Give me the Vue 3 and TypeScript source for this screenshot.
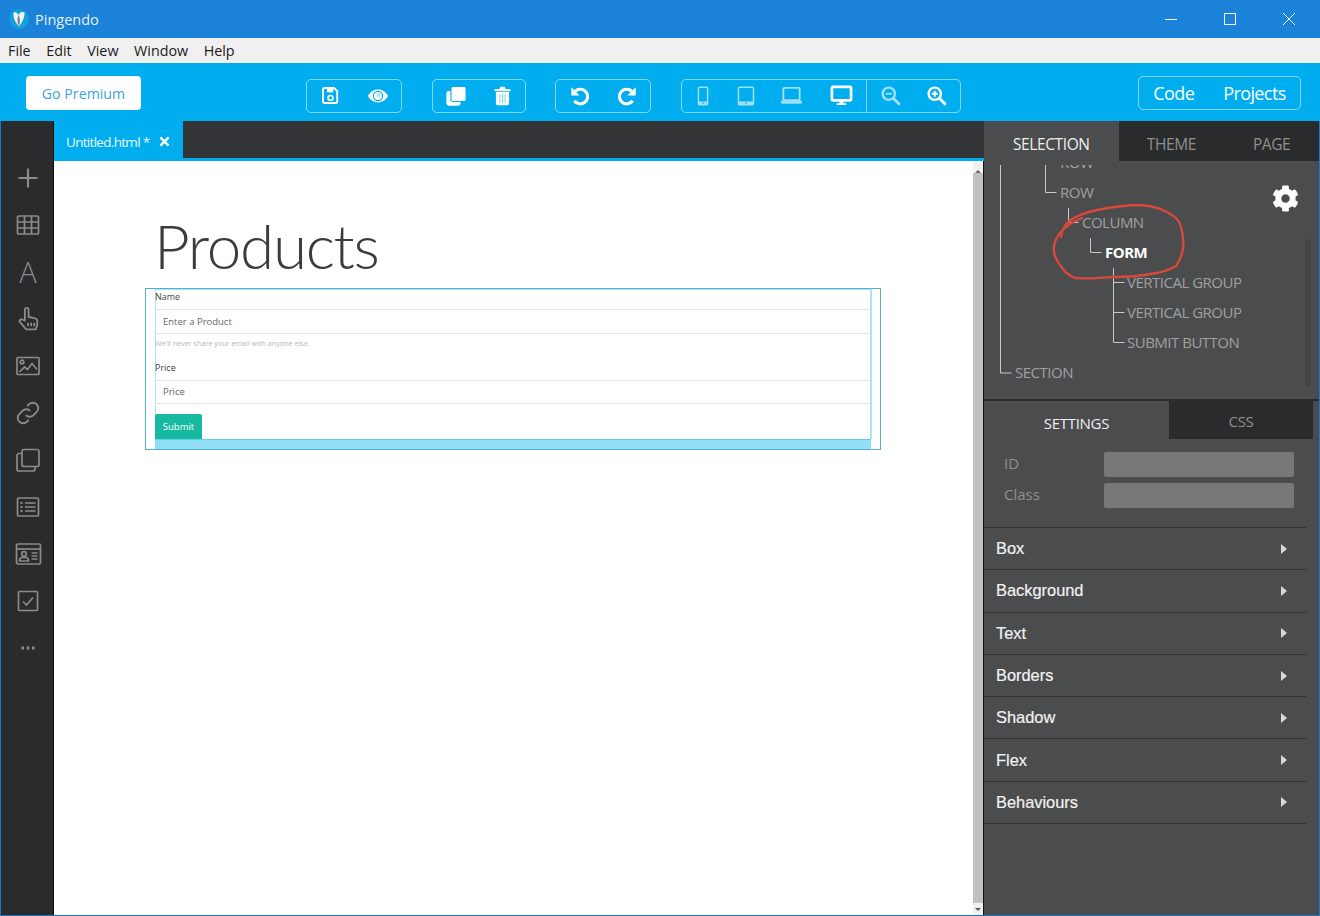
<script setup lang="ts">
const menus = ['File', 'Edit', 'View', 'Window', 'Help']

interface TreeRow {
  label: string
  indent: number
  active?: boolean
}

const treeRows: TreeRow[] = [
  { label: 'ROW', indent: 76 },
  { label: 'ROW', indent: 76 },
  { label: 'COLUMN', indent: 98 },
  { label: 'FORM', indent: 121, active: true },
  { label: 'VERTICAL GROUP', indent: 143 },
  { label: 'VERTICAL GROUP', indent: 143 },
  { label: 'SUBMIT BUTTON', indent: 143 },
  { label: 'SECTION', indent: 31 }
]

const sections = ['Box', 'Background', 'Text', 'Borders', 'Shadow', 'Flex', 'Behaviours']
</script>

<template>
  <div class="window">
    <header class="titlebar">
      <svg class="logo" viewBox="0 0 20 20">
        <circle cx="10" cy="10" r="10" fill="#12a0d8" />
        <path d="M4.500 3.500c2.500-1 4 .5 5 2.500 1-2.500 3.500-3.500 6-2.500 .3 5.500-2.500 10-5.500 14-3.500-3.500-6-8.500-5.500-14z" fill="#eef2f3" />
        <path d="M9.500 6c-1.500 3.500-1.500 8 .5 11.500 1.200-3.500 1.500-8-.5-11.500z" fill="#76858c" />
      </svg>
      <span class="app-name">Pingendo</span>
      <div class="win-controls">
        <svg viewBox="0 0 12 12" class="win-icon"><path d="M0 6.500h12" /></svg>
        <svg viewBox="0 0 12 12" class="win-icon"><rect x=".5" y=".5" width="11" height="11" /></svg>
        <svg viewBox="0 0 12 12" class="win-icon"><path d="M0 0l12 12M12 0L0 12" /></svg>
      </div>
    </header>

    <nav class="menubar">
      <span v-for="m in menus" :key="m">{{ m }}</span>
    </nav>

    <div class="toolbar">
      <button class="premium">Go Premium</button>

      <div class="group g-file">
        <span class="tool w47">
          <svg viewBox="0 0 24 24" width="19" height="19"><path d="M4.500 2.500h12l4 4v13a2 2 0 0 1-2 2h-14a2 2 0 0 1-2-2v-15a2 2 0 0 1 2-2z" fill="none" stroke="#fff" stroke-width="2.400" /><rect x="7.500" y="2" width="8" height="6" fill="#fff" /><circle cx="12" cy="15" r="3" fill="none" stroke="#fff" stroke-width="2.200" /></svg>
        </span>
        <span class="tool w47">
          <svg viewBox="0 0 24 24" width="22" height="22"><path d="M1 12c3-5 7-7 11-7s8 2 11 7c-3 5-7 7-11 7s-8-2-11-7z" fill="#fff" /><circle cx="12" cy="12" r="5" fill="#fff" stroke="#00aeef" stroke-width="1.300" /><circle cx="13" cy="10.800" r="2.800" fill="#bfe9f9" /></svg>
        </span>
      </div>

      <div class="group g-edit">
        <span class="tool w47">
          <svg viewBox="0 0 24 24" width="22" height="22"><rect x="1.500" y="6.500" width="15.500" height="16" rx="2.500" fill="#fff" /><rect x="6.500" y="1.500" width="16.500" height="16.500" rx="2" fill="#fff" stroke="#00aeef" stroke-width="1.200" /></svg>
        </span>
        <span class="tool w47">
          <svg viewBox="0 0 24 24" width="21" height="21"><path d="M3 4.500h5.500l1-2.500h5l1 2.500H21v2.500H3z" fill="#fff" /><path d="M4.500 8h15v13a2 2 0 0 1-2 2h-11a2 2 0 0 1-2-2z" fill="#fff" /><path d="M9 10.500v10M12 10.500v10M15 10.500v10" stroke="#7fd6f7" stroke-width="1.200" /></svg>
        </span>
      </div>

      <div class="group g-history">
        <span class="tool w47">
          <svg viewBox="0 0 24 24" width="22" height="22"><path d="M6.800 6.800a8 8 0 1 1-1 10.400" fill="none" stroke="#fff" stroke-width="3.400" /><path d="M2.500 2.500l9 9h-9z" fill="#fff" /></svg>
        </span>
        <span class="tool w47">
          <svg viewBox="0 0 24 24" width="22" height="22"><path d="M17.200 6.800a8 8 0 1 0 1 10.400" fill="none" stroke="#fff" stroke-width="3.400" /><path d="M21.500 2.500l-9 9h9z" fill="#fff" /></svg>
        </span>
      </div>

      <div class="group g-device">
        <span class="tool w43 dim">
          <svg viewBox="0 0 24 24" width="20" height="20"><rect x="6.500" y="1.500" width="11" height="21" rx="1.500" fill="none" stroke="#fff" stroke-width="1.800" /><path d="M6.500 18.500h11v4h-11z" fill="#fff" /><circle cx="12" cy="20.500" r="1" fill="#00aeef" /></svg>
        </span>
        <span class="tool w42 dim">
          <svg viewBox="0 0 24 24" width="20" height="20"><rect x="3" y="1.500" width="18" height="21" rx="1.500" fill="none" stroke="#fff" stroke-width="1.800" /><path d="M3 18.500h18v4H3z" fill="#fff" /><circle cx="12" cy="20.500" r="1" fill="#00aeef" /></svg>
        </span>
        <span class="tool w51 dim">
          <svg viewBox="0 0 24 24" width="23" height="23"><rect x="3.500" y="4" width="17" height="13" rx="1" fill="none" stroke="#fff" stroke-width="2" /><path d="M1 17.500h22v1.500a1.500 1.500 0 0 1-1.500 1.500h-19A1.500 1.500 0 0 1 1 19z" fill="#fff" /></svg>
        </span>
        <span class="tool w49">
          <svg viewBox="0 0 24 24" width="23" height="23"><rect x="2" y="3" width="20" height="14" rx="1" fill="none" stroke="#fff" stroke-width="2.800" /><path d="M10 17.500h4v2.500h3v1.800H7V20h3z" fill="#fff" /></svg>
        </span>
        <span class="tool-divider"></span>
        <span class="tool w47 dim">
          <svg viewBox="0 0 24 24" width="21" height="21"><circle cx="10" cy="10" r="7" fill="none" stroke="#fff" stroke-width="2.800" /><path d="M15.500 15.500l6 6" stroke="#fff" stroke-width="3.400" stroke-linecap="round" /><path d="M6.500 10h7" stroke="#fff" stroke-width="2.200" /></svg>
        </span>
        <span class="tool w47">
          <svg viewBox="0 0 24 24" width="21" height="21"><circle cx="10" cy="10" r="7" fill="none" stroke="#fff" stroke-width="2.800" /><path d="M15.500 15.500l6 6" stroke="#fff" stroke-width="3.400" stroke-linecap="round" /><path d="M6.500 10h7M10 6.500v7" stroke="#fff" stroke-width="2.200" /></svg>
        </span>
      </div>

      <div class="group g-views">
        <span>Code</span>
        <span>Projects</span>
      </div>
    </div>

    <div class="workspace">
      <aside class="sidebar">
        <span class="side-icon">
          <svg viewBox="0 0 24 24" width="24" height="24"><path d="M12 2.500v19M2.500 12h19" stroke-width="2.200" /></svg>
        </span>
        <span class="side-icon">
          <svg viewBox="0 0 24 24" width="24" height="24"><rect x="1.500" y="3" width="21" height="18" rx="1" /><path d="M1.500 9h21M1.500 15h21M8.500 3v18M15.500 3v18" /></svg>
        </span>
        <span class="side-icon side-letter">A</span>
        <span class="side-icon">
          <svg viewBox="0 0 24 24" width="25" height="25"><path d="M8.500 14V3.500a1.800 1.800 0 0 1 3.600 0v7l6.300 1.300a2.500 2.500 0 0 1 2 2.500V18l-1.500 4.500H9.800l-5.900-7a1.700 1.700 0 0 1 2.600-2.200z" /><path d="M11.500 16v3.500M14.500 16v3.500M17.500 16v3.500" /></svg>
        </span>
        <span class="side-icon">
          <svg viewBox="0 0 24 24" width="24" height="24"><rect x="1" y="3.500" width="22" height="17" rx="1" /><circle cx="6" cy="8" r="1.800" /><path d="M3.500 18l5-5 3 2.500 4.500-6 5 6" /></svg>
        </span>
        <span class="side-icon">
          <svg viewBox="0 0 24 24" width="26" height="26"><path d="M10 14a5 5 0 0 0 7.070 0l3-3a5 5 0 0 0-7.070-7.070l-1.700 1.700M14 10a5 5 0 0 0-7.070 0l-3 3a5 5 0 0 0 7.070 7.070l1.700-1.700" /></svg>
        </span>
        <span class="side-icon">
          <svg viewBox="0 0 24 24" width="24" height="24"><rect x="6" y="1.500" width="17" height="17" rx="2" /><path d="M6 5.500H3a2 2 0 0 0-2 2V21a2 2 0 0 0 2 2h14a2 2 0 0 0 2-2v-2.500" /></svg>
        </span>
        <span class="side-icon">
          <svg viewBox="0 0 24 24" width="24" height="24"><rect x="1.500" y="3" width="21" height="18" rx="1" /><path d="M9 8h10.500M9 12h10.500M9 16h10.500" /><path d="M4.500 8h2M4.500 12h2M4.500 16h2" stroke-width="2.200" /></svg>
        </span>
        <span class="side-icon">
          <svg viewBox="0 0 26 24" width="27" height="24"><rect x="1" y="2" width="24" height="20" rx="1.500" /><path d="M1 7h24" /><circle cx="8.500" cy="12" r="2.300" /><path d="M4 19v-1a3 3 0 0 1 3-2.500h3a3 3 0 0 1 3 2.500v1zM16 11h6M16 14h6M16 17h6" /></svg>
        </span>
        <span class="side-icon">
          <svg viewBox="0 0 24 24" width="24" height="24"><rect x="2.500" y="2.500" width="19" height="19" rx="1" /><path d="M7 12.500l3.500 3.500 6.500-7.500" /></svg>
        </span>
        <span class="side-icon">
          <svg viewBox="0 0 24 24" width="24" height="24"><path d="M5.500 12h2.500M10.800 12h2.500M16 12h2.500" stroke-width="2.800" /></svg>
        </span>
      </aside>

      <main class="editor">
        <div class="tabbar">
          <div class="doc-tab">
            <span class="doc-name">Untitled.html *</span>
            <svg viewBox="0 0 12 12" width="11" height="11"><path d="M1.500 1.500l9 9M10.500 1.500l-9 9" stroke="#fff" stroke-width="2.600" /></svg>
          </div>
        </div>

        <div class="canvas-wrap">
          <div class="canvas">
            <h1 class="page-title">Products</h1>
            <div class="selection">
              <form class="product-form" @submit.prevent>
                <label class="field-label">Name</label>
                <div class="fake-input">Enter a Product</div>
                <small class="help">We'll never share your email with anyone else.</small>
                <label class="field-label price-label">Price</label>
                <div class="fake-input price-input">Price</div>
                <button class="submit" type="submit">Submit</button>
              </form>
              <div class="form-band"></div>
            </div>
          </div>
          <div class="scrollbar">
            <span class="arrow up"></span>
            <span class="thumb"></span>
            <span class="arrow down"></span>
          </div>
        </div>
      </main>

      <aside class="panel">
        <div class="panel-tabs">
          <span class="p-tab selected">SELECTION</span>
          <span class="p-tab theme">THEME</span>
          <span class="p-tab page">PAGE</span>
        </div>

        <div class="tree-area">
          <div class="tree-clip">
            <div v-for="(row, i) in treeRows" :key="i" class="tree-row" :class="{ active: row.active }" :style="{ paddingLeft: row.indent + 'px' }">{{ row.label }}</div>
          </div>
          <svg class="tree-lines" viewBox="984 161 336 239">
            <path d="M1000.500 165v208h11M1045.500 165v27.500h11M1068.500 208v14.500h10M1090.500 238v14.500h11M1113.500 268v74.500h11M1113.500 282.500h11M1113.500 312.500h11" fill="none" stroke="#c9c9c9" />
            <path d="M1061 237c1-6 3-11 7-15 9-7 18-10 29-12 15-3 30-5 44-5 10 1 19 3 26 7 8 4 13 8 14 15 2 7 3 14 2 21-1 7-3 13-7 18-8 5-17 7-26 8-13 3-25 3-37 3-14 1-27 2-38 1-5-2-9-5-12-9-4-5-8-10-9-17-1-7 2-14 6-19 7-8 14-12 22-15" fill="none" stroke="#d9483b" stroke-width="2.400" stroke-linecap="round" />
          </svg>
          <svg class="gear" viewBox="0 0 512 512"><path fill="#fff" d="M487.4 315.7l-42.6-24.6c4.300-23.200 4.300-47 0-70.200l42.600-24.600c4.900-2.800 7.100-8.600 5.500-14-11.100-35.600-30-67.800-54.700-94.600-3.800-4.100-10-5.100-14.800-2.300L380.800 110c-17.900-15.400-38.500-27.300-60.800-35.100V25.800c0-5.600-3.900-10.500-9.400-11.700-36.700-8.200-74.300-7.800-109.200 0-5.500 1.200-9.400 6.100-9.400 11.700V75c-22.200 7.900-42.800 19.800-60.800 35.100L88.700 85.500c-4.900-2.800-11-1.900-14.800 2.300-24.700 26.700-43.600 58.900-54.700 94.600-1.700 5.400.6 11.200 5.500 14L67.300 221c-4.300 23.200-4.300 47 0 70.200l-42.600 24.600c-4.900 2.800-7.100 8.600-5.500 14 11.100 35.600 30 67.800 54.700 94.600 3.800 4.100 10 5.100 14.800 2.300l42.600-24.600c17.900 15.400 38.500 27.300 60.800 35.100v49.200c0 5.600 3.900 10.500 9.400 11.700 36.700 8.200 74.300 7.800 109.200 0 5.500-1.200 9.400-6.100 9.400-11.700v-49.200c22.200-7.900 42.800-19.800 60.800-35.100l42.600 24.600c4.900 2.800 11 1.900 14.800-2.300 24.700-26.700 43.600-58.900 54.700-94.600 1.500-5.500-.7-11.300-5.600-14.100zM256 336c-44.100 0-80-35.900-80-80s35.900-80 80-80 80 35.900 80 80-35.900 80-80 80z" /></svg>
          <span class="tree-scroll"></span>
        </div>

        <div class="sub-tabs">
          <span class="s-tab selected">SETTINGS</span>
          <span class="s-tab css">CSS</span>
        </div>

        <div class="attrs">
          <div class="attr-row"><span class="attr-label">ID</span><div class="attr-input"></div></div>
          <div class="attr-row"><span class="attr-label">Class</span><div class="attr-input"></div></div>
        </div>

        <ul class="sections">
          <li v-for="s in sections" :key="s">
            <span>{{ s }}</span>
            <i class="caret"></i>
          </li>
        </ul>
      </aside>
    </div>
  </div>
</template>

<style>
html, body {
  margin: 0;
  background: #fff;
  overflow: hidden;
}
</style>

<style scoped>
.window {
  box-sizing: border-box;
  width: 1320px;
  height: 916px;
  display: flex;
  flex-direction: column;
  overflow: hidden;
  font-family: "Open Sans", "Noto Sans", sans-serif;
  background: #1b78c4;
}

.titlebar {
  flex: 0 0 38px;
  display: flex;
  align-items: center;
  padding-left: 9px;
  background: #1a82d8;
  color: #e6f1fa;
}

.logo {
  width: 20px;
  height: 20px;
}

.app-name {
  margin-left: 6px;
  font-size: 14.500px;
}

.win-controls {
  margin-left: auto;
  display: flex;
  gap: 47px;
  padding-right: 25px;
}

.win-icon {
  width: 12px;
  height: 12px;
  fill: none;
  stroke: #fff;
  stroke-width: 1;
  overflow: visible;
}

.menubar {
  flex: 0 0 25px;
  display: flex;
  align-items: center;
  gap: 15.600px;
  padding-left: 8px;
  background: #f0f0f0;
  color: #1a1a1a;
  font-size: 14.300px;
}

.toolbar {
  flex: 0 0 58px;
  display: flex;
  align-items: center;
  padding-left: 26px;
  background: #00aeef;
  color: #fff;
}

.premium {
  width: 115px;
  height: 34px;
  padding: 0;
  margin-top: 2px;
  border: none;
  border-radius: 4px;
  background: #fff;
  color: #3ba5d6;
  font: 14.200px "Open Sans", sans-serif;
}

.group {
  box-sizing: border-box;
  display: flex;
  align-items: center;
  justify-content: center;
  height: 34px;
  margin-top: 7px;
  border: 1px solid rgba(255, 255, 255, 0.5);
  border-radius: 5px;
}

.g-file {
  width: 96px;
  margin-left: 165px;
}

.g-edit {
  width: 94px;
  margin-left: 30px;
}

.g-history {
  width: 96px;
  margin-left: 29px;
}

.g-device {
  width: 280px;
  margin-left: 30px;
}

.g-views {
  width: 163px;
  margin-left: 177px;
  margin-top: 2px;
  gap: 29px;
  font-size: 18px;
  letter-spacing: -0.6px;
}

.tool {
  display: flex;
  align-items: center;
  justify-content: center;
}

.tool.dim {
  opacity: 0.62;
}

.w42 { width: 42px; }
.w43 { width: 43px; }
.w47 { width: 47px; }
.w49 { width: 49px; }
.w51 { width: 51px; }

.tool-divider {
  align-self: stretch;
  width: 1px;
  background: rgba(255, 255, 255, 0.5);
}

.workspace {
  flex: 1;
  min-height: 0;
  display: flex;
  margin: 0 1px 1px;
}

.sidebar {
  box-sizing: border-box;
  flex: 0 0 53px;
  display: flex;
  flex-direction: column;
  align-items: center;
  padding: 33px 0 0 2px;
  background: #2a2b2d;
  border-right: 1px solid #0c0c0c;
}

.side-icon {
  flex: 0 0 47px;
  display: flex;
  align-items: center;
  justify-content: center;
  color: #8b8b8b;
}

.side-icon svg {
  fill: none;
  stroke: currentColor;
  stroke-width: 1.700;
}

.side-letter {
  font-size: 29px;
  font-weight: 300;
}

.editor {
  flex: 0 0 930px;
  display: flex;
  flex-direction: column;
  min-width: 0;
}

.tabbar {
  flex: 0 0 37px;
  display: flex;
  background: #333435;
}

.doc-tab {
  width: 129px;
  box-sizing: border-box;
  display: flex;
  align-items: center;
  gap: 10px;
  padding: 4px 0 0 12px;
  background: #00aeef;
  color: #e8f7fd;
}

.doc-name {
  font-size: 13.500px;
  letter-spacing: -0.7px;
}

.canvas-wrap {
  flex: 1;
  min-height: 0;
  display: flex;
  border-top: 3px solid #00aeef;
  background: #fff;
}

.canvas {
  flex: 1;
  min-width: 0;
  padding: 0 0 0 91px;
}

.page-title {
  margin: 42px 0 0 9px;
  height: 85px;
  font-size: 62px;
  line-height: 84px;
  letter-spacing: -1.3px;
  font-family: Lato, "Open Sans", sans-serif;
  font-weight: 300;
  color: #3c3c3c;
}

.selection {
  box-sizing: border-box;
  width: 736px;
  height: 162px;
  padding: 0 9px;
  border: 1px solid #4fb3cf;
}

.product-form {
  box-sizing: border-box;
  display: flex;
  flex-direction: column;
  height: 150px;
  border: solid #a9e5f8;
  border-width: 1px 2px 0 1px;
  margin-right: -1px;
  font-size: 9.500px;
  color: #555;
}

.product-form > * {
  margin-left: -1px;
}

.field-label {
  display: block;
  height: 19px;
  line-height: 14px;
  font-size: 9px;
  color: #444;
}

.fake-input {
  box-sizing: border-box;
  flex: 0 0 25px;
  padding-left: 8px;
  line-height: 23px;
  border: solid #e4e4e4;
  border-width: 1px 0;
  color: #666;
}

.help {
  height: 20px;
  line-height: 19px;
  font-size: 7.200px;
  color: #b8b8b8;
}

.price-label {
  height: 20px;
  margin-top: 7px;
  line-height: 14px;
}

.price-input {
  flex-basis: 24px;
  line-height: 22px;
}

.submit {
  width: 47px;
  height: 25px;
  margin-top: 10px;
  padding: 0;
  border: none;
  border-radius: 2px 2px 0 0;
  background: #18b9a1;
  color: #fff;
  font: 9.500px "Open Sans", sans-serif;
}

.form-band {
  height: 10px;
  background: #91def6;
  border-top: 1px solid #63cfee;
  box-sizing: border-box;
}

.scrollbar {
  flex: 0 0 11px;
  display: flex;
  flex-direction: column;
  align-items: center;
  background: #f1f1f1;
  border-right: 1px solid #111;
  box-sizing: border-box;
}

.thumb {
  flex: 1;
  width: 10px;
  background: #c1c1c1;
}

.arrow {
  flex: 0 0 12px;
  width: 0;
  height: 0;
  border-left: 3px solid transparent;
  border-right: 3px solid transparent;
  box-sizing: border-box;
}

.arrow.up {
  flex-basis: 9px;
  margin-top: 3px;
  border-bottom: 3px solid #666;
  height: 3px;
  flex-grow: 0;
}

.arrow.down {
  flex-basis: 3px;
  margin: 5px 0 4px;
  border-top: 3px solid #555;
}

.panel {
  flex: 1;
  min-width: 0;
  display: flex;
  flex-direction: column;
  background: #4b4c4e;
}

.panel-tabs {
  flex: 0 0 40px;
  display: flex;
  background: #2a2b2d;
  color: #8f8f8f;
  font-size: 15.500px;
}

.p-tab {
  display: flex;
  align-items: center;
  justify-content: center;
  padding-top: 5px;
  letter-spacing: -0.4px;
}

.p-tab.selected {
  width: 135px;
  background: #4b4c4e;
  color: #eee;
}

.p-tab.theme {
  width: 106px;
}

.p-tab.page {
  width: 95px;
}

.tree-area {
  position: relative;
  flex: 0 0 240px;
  box-sizing: border-box;
  padding-top: 4px;
  border-bottom: 2px solid #2a2b2d;
}

.tree-clip {
  height: 234px;
  overflow: hidden;
}

.tree-row {
  height: 30px;
  line-height: 30px;
  font-size: 15px;
  letter-spacing: -0.5px;
  color: #a0a0a0;
  white-space: nowrap;
}

.tree-row:first-child {
  margin-top: -18px;
}

.tree-row.active {
  color: #fff;
  font-weight: 700;
}

.tree-lines {
  position: absolute;
  left: 0;
  top: 0;
  width: 336px;
  height: 239px;
  pointer-events: none;
}

.gear {
  position: absolute;
  left: 288px;
  top: 24px;
  width: 27px;
  height: 27px;
}

.tree-scroll {
  position: absolute;
  left: 321px;
  top: 78px;
  width: 6px;
  height: 148px;
  border-radius: 3px;
  background: #434445;
}

.sub-tabs {
  flex: 0 0 38px;
  display: flex;
  padding-right: 6px;
  font-size: 15px;
  letter-spacing: -0.3px;
}

.s-tab {
  flex: 1;
  display: flex;
  align-items: center;
  justify-content: center;
}

.s-tab.css {
  padding-top: 2px;
  background: #2a2b2d;
  color: #8f8f8f;
}

.s-tab.selected {
  flex: 0 0 185px;
  padding-top: 5px;
  background: #4b4c4e;
  color: #eee;
}

.attrs {
  display: flex;
  flex-direction: column;
  gap: 6px;
  padding: 13px 25px 19px 20px;
}

.attr-row {
  display: flex;
  align-items: center;
  justify-content: space-between;
  color: #8f8f8f;
  font-size: 15px;
}

.attr-label {
  margin-top: -3px;
}

.attr-input {
  width: 190px;
  height: 25px;
  border-radius: 2px;
  background: #787878;
}

.sections {
  margin: 0;
  padding: 0;
  list-style: none;
  width: 322px;
  border-top: 1px solid #333;
}

.sections li {
  box-sizing: border-box;
  height: 42.300px;
  display: flex;
  align-items: center;
  justify-content: space-between;
  padding: 0 19px 0 12px;
  border-bottom: 1px solid #333;
  font-family: "Liberation Sans", Arial, sans-serif;
  font-size: 16.400px;
  -webkit-text-stroke: 0.2px #f2f2f2;
  color: #f2f2f2;
}

.caret {
  width: 0;
  height: 0;
  border-left: 6px solid #d8d8d8;
  border-top: 5px solid transparent;
  border-bottom: 5px solid transparent;
}
</style>
